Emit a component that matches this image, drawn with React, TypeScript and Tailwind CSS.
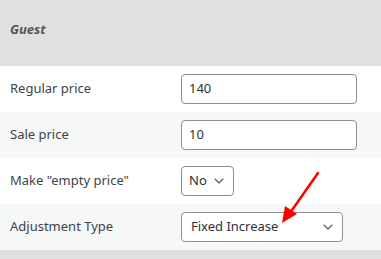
import { ChevronDown } from "lucide-react";

const font = { fontFamily: '"Noto Sans", "Open Sans", sans-serif' };

function Row({ label, shade, children }: { label: string; shade?: boolean; children: React.ReactNode }) {
  return (
    <div className={`flex items-center h-[46px] ${shade ? "bg-[#f6f7f7]" : "bg-white"}`}>
      <div className="w-[181px] pl-[10px] text-[13px] text-[#3c434a]">{label}</div>
      {children}
    </div>
  );
}

export default function App() {
  return (
    <div className="relative w-[381px] h-[259px] bg-[#e0e0e0] overflow-hidden" style={font}>
      {/* Header */}
      <div className="h-[66px] flex items-center pl-[10px] pb-[6px]">
        <span className="italic font-bold text-[13px] text-[#50575e]">Guest</span>
      </div>

      <Row label="Regular price">
        <div className="w-[176px] h-[30px] border border-[#8c8f94] rounded-[4px] bg-white flex items-center px-[7px] text-[13px] text-[#2c3338]">
          140
        </div>
      </Row>

      <Row label="Sale price" shade>
        <div className="w-[176px] h-[30px] border border-[#8c8f94] rounded-[4px] bg-white flex items-center px-[7px] text-[13px] text-[#2c3338]">
          10
        </div>
      </Row>

      <Row label='Make "empty price"'>
        <div className="w-[53px] h-[30px] border border-[#8c8f94] rounded-[4px] bg-white flex items-center justify-between pl-[7px] pr-[6px] text-[13px] text-[#2c3338]">
          No
          <ChevronDown size={16} strokeWidth={1.6} className="text-[#50575e]" />
        </div>
      </Row>

      <Row label="Adjustment Type" shade>
        <div className="w-[162px] h-[30px] border border-[#8c8f94] rounded-[4px] bg-white flex items-center justify-between pl-[9px] pr-[6px] text-[13px] text-[#2c3338]">
          Fixed Increase
          <ChevronDown size={16} strokeWidth={1.6} className="text-[#50575e]" />
        </div>
      </Row>

      {/* red annotation arrow */}
      <svg className="absolute left-0 top-0" width="381" height="259" viewBox="0 0 381 259">
        <line x1="318" y1="173" x2="290" y2="213" stroke="#ff0000" strokeWidth="2.5" strokeLinecap="round" />
        <polygon points="282,223 285,206 297,214" fill="#ff0000" />
      </svg>
    </div>
  );
}
